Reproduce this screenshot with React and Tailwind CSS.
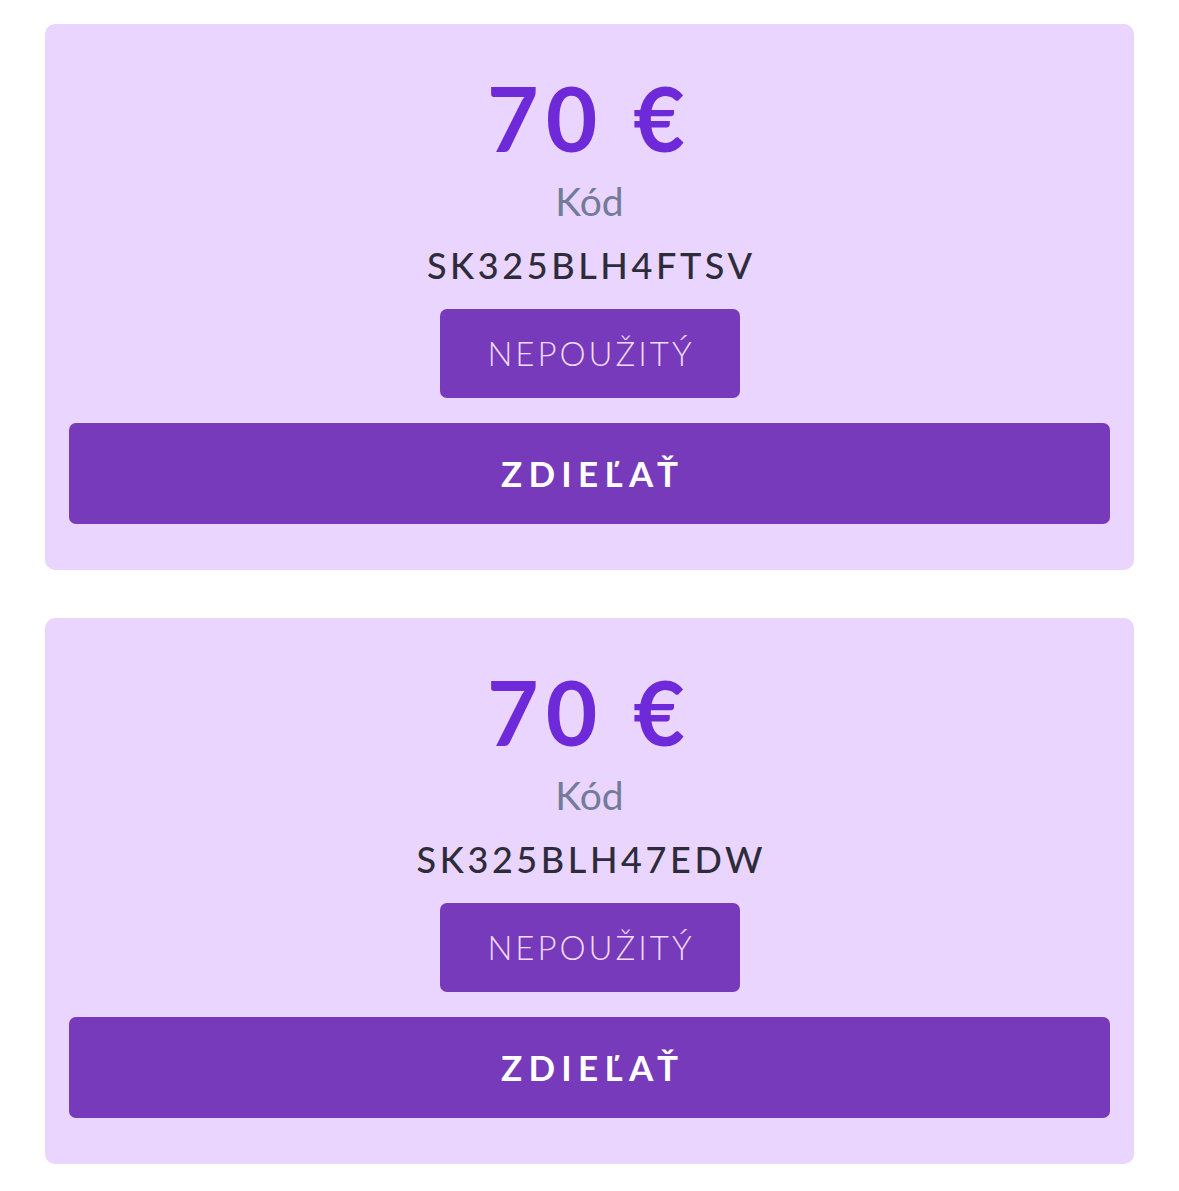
import React from "react";

function Card({ code }) {
  return (
    <div className="flex flex-col items-center rounded-[10px] bg-[#ead5fe] px-[24px] pt-[49px] pb-[46px]">
      <div className="text-[89px] leading-[89px] font-bold text-[#6e2ad9] tracking-[0.08em]">70 €</div>
      <div className="mt-[20px] text-[39px] leading-[39px] text-[#747b98]">Kód</div>
      <div className="mt-[26px] text-[36px] leading-[36px] font-medium text-[#2e2c3b] tracking-[0.1em] pl-[0.1em]">{code}</div>
      <div className="mt-[26px] flex h-[89px] w-[300px] items-center justify-center rounded-[7px] bg-[#763abb] text-[33px] font-light tracking-[0.09em] pl-[0.09em] text-[#f3dcfc]">
        NEPOUŽITÝ
      </div>
      <div className="mt-[25px] flex h-[101px] w-full items-center justify-center rounded-[7px] bg-[#763abb] text-[35px] font-bold tracking-[0.18em] pl-[0.18em] text-white">
        ZDIEĽAŤ
      </div>
    </div>
  );
}

export default function App() {
  return (
    <div className="min-h-[1191px] bg-white px-[45px] pt-[24px] pb-[28px] flex flex-col gap-[48px]" style={{ fontFamily: 'Lato, "Noto Sans", sans-serif' }}>
      <Card code="SK325BLH4FTSV" />
      <Card code="SK325BLH47EDW" />
    </div>
  );
}
